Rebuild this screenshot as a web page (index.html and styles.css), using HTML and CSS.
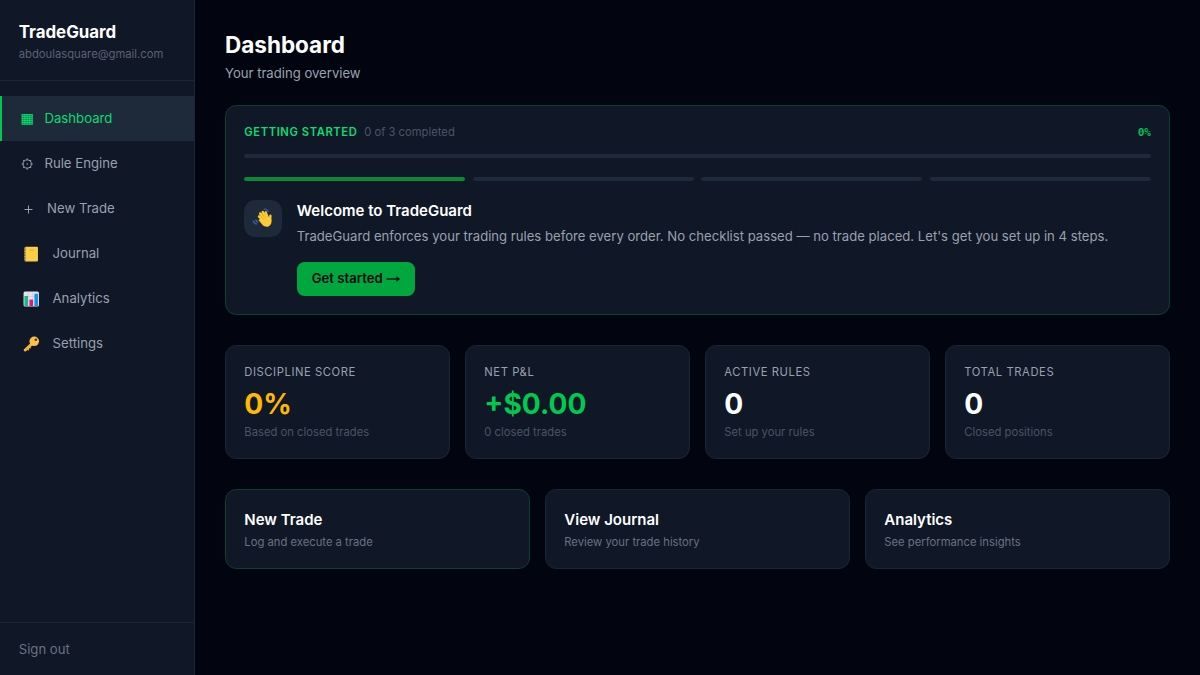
FILE: index.html
```html
<!DOCTYPE html>
<html lang="en">
<head>
  <meta charset="UTF-8">
  <meta name="viewport" content="width=device-width, initial-scale=1.0">
  <title>TradeGuard</title>
  <link rel="stylesheet" href="styles.css">
</head>
<body>
  <div class="app">
    <aside class="sidebar">
      <div class="brand">
        <h2>TradeGuard</h2>
        <p>abdoulasquare@gmail.com</p>
      </div>
      <nav class="nav">
        <a class="nav-item active" href="#">
          <svg class="icon" viewBox="0 0 12 12"><rect x="0.5" y="1" width="11" height="10.5" fill="#0a7a48"/><path d="M0.5 1.5h11M0.5 3.5h11M0.5 5.5h11M0.5 7.5h11M0.5 9.5h11M0.5 11.3h11M1 1v10.5M3.5 1v10.5M6 1v10.5M8.5 1v10.5M11 1v10.5" stroke="#05df72" stroke-width="0.8"/></svg>
          <span>Dashboard</span>
        </a>
        <a class="nav-item" href="#">
          <svg class="icon" viewBox="0 0 12 12" fill="none" stroke="#99a1af"><circle cx="6" cy="6" r="4.1"/><circle cx="6" cy="6" r="0.7" fill="#99a1af" stroke="none"/><path d="M6 0.4v1.5M6 10.1v1.5M0.4 6h1.5M10.1 6h1.5M2 2l1.1 1.1M8.9 8.9L10 10M10 2L8.9 3.1M3.1 8.9L2 10"/></svg>
          <span>Rule Engine</span>
        </a>
        <a class="nav-item" href="#">
          <svg class="icon icon-plus" viewBox="0 0 15 12" fill="none" stroke="#99a1af"><path d="M3.5 6.5h8M7.5 2.5v8"/></svg>
          <span>New Trade</span>
        </a>
        <a class="nav-item" href="#">
          <svg class="icon icon-emoji" viewBox="0 0 20 16"><rect x="3.5" y="0.8" width="13.2" height="14.6" rx="1" fill="#fcd046"/><path d="M4.2 1v14.2" stroke="#d99b25" stroke-width="1.3"/><path d="M2.8 3h1.8M2.8 5.5h1.8M2.8 8h1.8M2.8 10.5h1.8M2.8 13h1.8" stroke="#a8a9b5" stroke-width="0.8"/><path d="M8 4h5" stroke="#eda82d"/></svg>
          <span>Journal</span>
        </a>
        <a class="nav-item" href="#">
          <svg class="icon icon-emoji" viewBox="0 0 20 16"><rect x="2.3" y="0.6" width="15.4" height="15" rx="1.5" fill="#e6e3ee"/><path d="M6.7 1v14M11.5 1v14M2.5 5.5h15M2.5 10.5h15" stroke="#c6c1d5" stroke-width="0.5"/><rect x="3.2" y="5" width="3.6" height="10" fill="#18b989"/><rect x="8.2" y="8.6" width="3.6" height="6.4" fill="#d51c82"/><rect x="13.2" y="2.7" width="3.6" height="12.3" fill="#1593e5"/></svg>
          <span>Analytics</span>
        </a>
        <a class="nav-item" href="#">
          <svg class="icon icon-emoji" viewBox="0 0 20 16"><path d="M11.2 7.3L4 14" stroke="#f5b536" stroke-width="3" stroke-linecap="round"/><path d="M6 12.8l1.5 1.4M8 11l1.3 1.2" stroke="#f5b536" stroke-width="1.4"/><circle cx="13" cy="5.3" r="4.8" fill="#fbc044"/><circle cx="14.6" cy="3.7" r="1.3" fill="#433638"/></svg>
          <span>Settings</span>
        </a>
      </nav>
      <div class="sidebar-footer">
        <button type="button" class="signout">Sign out</button>
      </div>
    </aside>

    <main class="main">
      <header class="page-header">
        <h1>Dashboard</h1>
        <p>Your trading overview</p>
      </header>

      <!-- Onboarding -->
      <section class="card onboarding">
        <div class="onboarding-top">
          <div class="onboarding-label">
            <span class="label-green">Getting started</span>
            <span class="label-muted">0 of 3 completed</span>
          </div>
          <span class="percent">0%</span>
        </div>
        <div class="progress"></div>
        <div class="steps">
          <div class="step current"></div>
          <div class="step"></div>
          <div class="step"></div>
          <div class="step"></div>
        </div>
        <div class="welcome">
          <div class="welcome-icon">
            <svg viewBox="0 0 22 20"><g fill="none" stroke="#ffca35" stroke-linecap="round"><path d="M12.5 13L7.1 8.5" stroke-width="2.6"/><path d="M13 11L8.3 5.6" stroke-width="2.6"/><path d="M14.5 10L10.8 4.1" stroke-width="2.6"/><path d="M16 10L13.7 4.2" stroke-width="2.2"/><path d="M18 12.5L18.4 7.8" stroke-width="2.4"/></g><path d="M8.2 10.8L15.5 8l3.7 2.5c1 3.5 0 6.5-2.4 7.7-2.5 1.3-5.3 0-7-2.3L6.5 12z" fill="#ffca35"/><path d="M9.2 9.3l3 2.8M10.9 7.3l2.8 3.3M13 6.5l2 3.2" stroke="#e9a72e" stroke-width="0.5"/><path d="M12.5 1.3c1.8-.2 3 .6 3.6 2M1.5 13c.2 1.6 1.2 2.6 2.8 2.8M4 12c.2 1.1.8 1.7 1.8 1.9" fill="none" stroke="#34569b" stroke-width="1.7" stroke-linecap="round"/></svg>
          </div>
          <div class="welcome-body">
            <h3>Welcome to TradeGuard</h3>
            <p>TradeGuard enforces your trading rules before every order. No checklist passed — no trade placed. Let's get you set up in 4 steps.</p>
            <button type="button" class="btn">
              Get started
              <svg class="arrow" viewBox="0 0 15 10" fill="none" stroke="#030712" stroke-width="1.3"><path d="M0.5 5h12.5"/><path d="M10.5 2.3L14 5l-3.5 2.7z" fill="#030712" stroke="none"/></svg>
            </button>
          </div>
        </div>
      </section>

      <section class="stats">
        <div class="card stat">
          <p class="stat-label">Discipline score</p>
          <p class="stat-value amber">0%</p>
          <p class="stat-note">Based on closed trades</p>
        </div>
        <div class="card stat">
          <p class="stat-label">Net P&amp;L</p>
          <p class="stat-value green">+$0.00</p>
          <p class="stat-note">0 closed trades</p>
        </div>
        <div class="card stat">
          <p class="stat-label">Active rules</p>
          <p class="stat-value">0</p>
          <p class="stat-note">Set up your rules</p>
        </div>
        <div class="card stat">
          <p class="stat-label">Total trades</p>
          <p class="stat-value">0</p>
          <p class="stat-note">Closed positions</p>
        </div>
      </section>

      <section class="actions">
        <a class="card action action-primary" href="#">
          <h3>New Trade</h3>
          <p>Log and execute a trade</p>
        </a>
        <a class="card action" href="#">
          <h3>View Journal</h3>
          <p>Review your trade history</p>
        </a>
        <a class="card action" href="#">
          <h3>Analytics</h3>
          <p>See performance insights</p>
        </a>
      </section>
    </main>
  </div>
</body>
</html>
```
FILE: styles.css
```css
* {
  margin: 0;
  padding: 0;
  box-sizing: border-box;
}
html {
  font-size: 15px;
}
body {
  font-family: Inter, sans-serif;
  background-color: #02050f;
  color: #fff;
  line-height: 1.5;
}
a {
  color: inherit;
  text-decoration: none;
}
button {
  font-family: inherit;
  border: none;
  cursor: pointer;
}
.app {
  display: flex;
  height: 100vh;
}

/* Sidebar */
.sidebar {
  width: 13rem;
  flex-shrink: 0;
  display: flex;
  flex-direction: column;
  background-color: #101726;
  border-right: 1px solid #1c2635;
}
.brand {
  padding: 1.27rem 1.25rem 1.21rem;
  border-bottom: 1px solid #1c2635;
}
.brand h2 {
  font-size: 1.125rem;
  line-height: 1.75rem;
  font-weight: 700;
}
.brand p {
  margin-top: 0.12rem;
  font-size: 0.75rem;
  line-height: 1rem;
  color: #5b6373;
}
.nav {
  flex: 1;
  padding: 1rem 0;
}
.nav-item {
  display: flex;
  align-items: center;
  gap: 0.75rem;
  height: 3rem;
  padding: 0 1.25rem;
  border-left: 2px solid transparent;
  font-size: 0.88rem;
  color: #99a1af;
}
.nav-item.active {
  background-color: #1e2939;
  border-left-color: #00c950;
  color: #05df72;
}
.icon {
  width: 12.4px;
  height: 12px;
  flex-shrink: 0;
}
.icon-plus {
  width: 15px;
}
.icon-emoji {
  width: 20.5px;
  height: 16px;
}
.sidebar-footer {
  padding: 1.1rem 1.25rem;
  border-top: 1px solid #1c2635;
}
.signout {
  display: block;
  background: none;
  font-size: 0.875rem;
  line-height: 1.25rem;
  color: #6a7282;
}

/* Main */
.main {
  flex: 1;
  padding: 2rem;
}
.page-header {
  margin-bottom: 1.5rem;
}
.page-header h1 {
  font-size: 1.5rem;
  line-height: 2rem;
  font-weight: 700;
}
.page-header p {
  margin-top: 0.25rem;
  font-size: 0.875rem;
  line-height: 1.25rem;
  color: #99a1af;
}
.card {
  background-color: #101726;
  border: 1px solid #1c2635;
  border-radius: 0.75rem;
  padding: 1.27rem 1.22rem 1.17rem;
}
.onboarding {
  margin-bottom: 2rem;
  padding: 1.25rem 1.22rem 1.22rem;
  border-color: #0f3f30;
}
.onboarding-top {
  display: flex;
  justify-content: space-between;
  align-items: center;
  margin-bottom: 0.97rem;
  font-size: 0.75rem;
  line-height: 1rem;
}
.onboarding-label {
  display: flex;
  gap: 0.45rem;
}
.label-green {
  font-weight: 600;
  letter-spacing: 0.05em;
  text-transform: uppercase;
  color: #05df72;
}
.label-muted {
  color: #4a5565;
}
.percent {
  font-family: "DejaVu Sans Mono", monospace;
  font-weight: 700;
  letter-spacing: -0.03em;
  color: #00bf55;
}
.progress {
  height: 0.25rem;
  margin-bottom: 1.25rem;
  border-radius: 1rem;
  background-color: #1e2939;
}
.steps {
  display: grid;
  grid-template-columns: repeat(4, 1fr);
  gap: 0.5rem;
  margin-bottom: 1.28rem;
}
.step {
  height: 0.25rem;
  border-radius: 1rem;
  background-color: #1e2939;
}
.step.current {
  background-color: #0a8a35;
}
.welcome {
  display: flex;
  align-items: flex-start;
  gap: 1rem;
}
.welcome-icon {
  display: flex;
  align-items: center;
  justify-content: center;
  width: 2.5rem;
  height: 2.5rem;
  border-radius: 0.75rem;
  background-color: #1e2939;
}
.welcome-icon svg {
  width: 22px;
  height: 20px;
}
.welcome-body h3 {
  font-size: 1rem;
  line-height: 1.5rem;
  font-weight: 600;
}
.welcome-body p {
  margin: 0.25rem 0 0.97rem;
  font-size: 0.876rem;
  line-height: 1.625;
  color: #99a1af;
}
.btn {
  display: flex;
  align-items: center;
  gap: 0.2rem;
  padding: 0.5rem 0.93rem 0.5rem 1rem;
  border-radius: 0.5rem;
  background-color: #00a63e;
  font-size: 0.875rem;
  line-height: 1.25rem;
  font-weight: 600;
  color: #030712;
}
.arrow {
  width: 15px;
  height: 10px;
}

/* Stats */
.stats {
  display: grid;
  grid-template-columns: repeat(4, 1fr);
  gap: 1rem;
  margin-bottom: 2rem;
}
.stat-label {
  margin-bottom: 0.51rem;
  font-size: 0.75rem;
  line-height: 1rem;
  letter-spacing: 0.05em;
  text-transform: uppercase;
  color: #99a1af;
}
.stat-value {
  font-size: 1.875rem;
  line-height: 2.25rem;
  font-weight: 700;
}
.stat-value.amber {
  color: #ffb900;
}
.stat-value.green {
  color: #00c950;
}
.stat-note {
  margin-top: 0.25rem;
  font-size: 0.75rem;
  line-height: 1rem;
  color: #4a5565;
}

/* Quick actions */
.actions {
  display: grid;
  grid-template-columns: repeat(3, 1fr);
  gap: 1rem;
}
.action h3 {
  font-size: 1rem;
  line-height: 1.5rem;
  font-weight: 600;
}
.action p {
  margin-top: 0.25rem;
  font-size: 0.75rem;
  line-height: 1rem;
  color: #6a7282;
}
.action-primary {
  border-color: #0f3f30;
}
```
